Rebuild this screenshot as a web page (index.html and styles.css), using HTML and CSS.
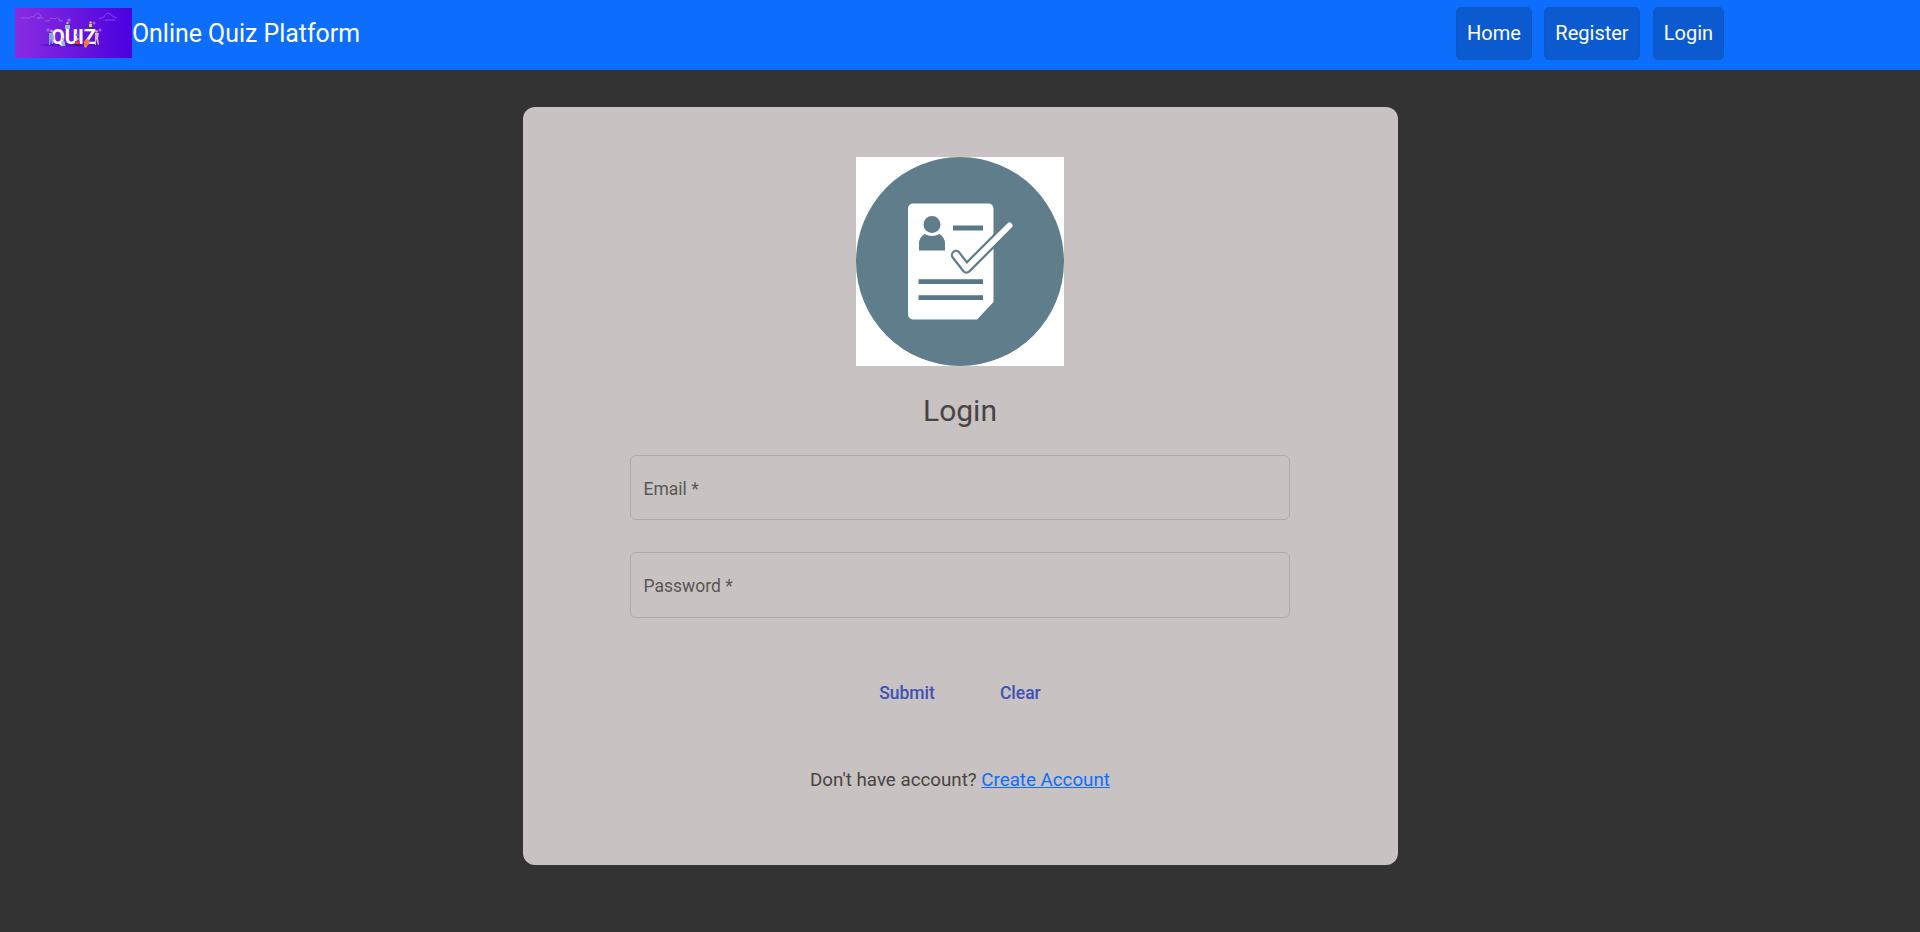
FILE: index.html
```html
<!DOCTYPE html>
<html lang="en">
<head>
<meta charset="utf-8">
<title>Online Quiz Platform</title>
<link rel="stylesheet" href="styles.css">
</head>
<body>
<header class="navbar">
  <a class="brand">
    <svg class="logo" viewBox="0 0 117 50" role="img" aria-label="Quiz">
      <defs>
        <linearGradient id="sky"><stop offset="0" stop-color="#8a2be2"/><stop offset=".5" stop-color="#6b18de"/><stop offset="1" stop-color="#4a00e0"/></linearGradient>
      </defs>
      <rect width="117" height="50" fill="url(#sky)"/>
      <g fill="none" stroke="#b184ee" stroke-width=".6" opacity=".85">
        <path d="M6 10h9c1-2 3-2 4-1 1-4 5-5 7-1 1 1-1 2-4 2h7"/>
        <path d="M30 13h4c1-3 4-3 6-2 2-2 4-1 4 1 2 0 2 1 0 1h4"/>
        <path d="M84 11l5-2c1-4 6-5 8-1 2 0 2 2 5 2M90 12h10"/>
      </g>
      <ellipse cx="58" cy="37" rx="33" ry="1.5" fill="#4c0bba" opacity=".6"/>
      <text class="logo-text" x="36" y="36" textLength="45" lengthAdjust="spacingAndGlyphs">QUIZ</text>
      <g fill="#8f63f2"><circle cx="33" cy="22" r="1.7"/><circle cx="54" cy="12" r="1.8"/><circle cx="79" cy="15" r="1.5"/><circle cx="85" cy="22" r="1.6"/><circle cx="62" cy="27" r="1.4"/></g>
      <g fill="#f0ad72"><circle cx="36.5" cy="23" r="1.2"/><circle cx="52.5" cy="15" r="1.2"/><circle cx="75.5" cy="14.5" r="1.2"/><circle cx="81.500" cy="23.500" r="1.300"/><circle cx="48" cy="31" r="1.2"/><circle cx="62.500" cy="31" r="1.200"/></g>
      <path d="M34 25h4l1 5-1 6h-1l-1-5-1 6h-1z" fill="#8ba5df"/>
      <path d="M50 17h5v4h-5zM46.500 33h3l1 5h-4z" fill="#8fc4dc"/>
      <path d="M74 16h3v3h-3z" fill="#e7c53e"/><path d="M72 19h6l-1 2h-5z" fill="#244a83"/>
      <path d="M60 33h5v3h-5z" fill="#ee3155"/><path d="M59 36h7v1.500h-7z" fill="#302159"/>
      <path d="M69 33l4-2 2 3-4 6-2-1z" fill="#ee7942"/>
      <path d="M80 25h4l-1 5 1 7h-1l-2-6v6h-1z" fill="#d8b9c7"/>
    </svg>
    <span class="brand-name">Online Quiz Platform</span>
  </a>
  <nav class="nav">
    <a class="nav-link nav-home">Home</a>
    <a class="nav-link nav-register">Register</a>
    <a class="nav-link nav-login">Login</a>
  </nav>
</header>
<main class="card">
  <svg class="avatar" viewBox="0 0 208 209" aria-hidden="true">
    <rect width="208" height="209" fill="#fff"/>
    <ellipse cx="104" cy="104.500" rx="104" ry="104.500" fill="#607d8b"/>
    <path d="M57 46.500h75.500a5 5 0 0 1 5 5V145l-16.500 17.500H57a5 5 0 0 1-5-5v-106a5 5 0 0 1 5-5z" fill="#fff"/>
    <g fill="#607d8b">
      <path d="M63 93.500V86.500q0-6 5.500-9.500 7.500 4 15 0 5.500 3.500 5.500 9.500v7z"/>
      <circle cx="76" cy="67.500" r="8.500"/>
    </g>
    <path d="M97 71h30M62.500 124.700h64.500M62.500 140.700h64.500" stroke="#567887" stroke-width="4.800" fill="none"/>
    <path d="M100 98l10.500 13.500L153.500 68.500" fill="none" stroke="#607d8b" stroke-width="10.400" stroke-linecap="round" stroke-linejoin="round"/>
    <path d="M100 98l10.500 13.500L153.500 68.500" fill="none" stroke="#fff" stroke-width="6" stroke-linecap="round" stroke-linejoin="round"/>
  </svg>
  <h1 class="title">Login</h1>
  <form class="form">
    <label class="field">Email *</label>
    <label class="field">Password *</label>
    <div class="actions">
      <button class="action" type="button">Submit</button>
      <button class="action" type="button">Clear</button>
    </div>
  </form>
  <p class="signup">Don't have account? <a class="signup-link">Create Account</a></p>
</main>
</body>
</html>
```
FILE: styles.css
```css
* { box-sizing: border-box; }
body {
  margin: 0;
  min-height: 932px;
  background: #333;
  color: #484444;
  font-family: Roboto, sans-serif;
}
.navbar {
  display: flex;
  justify-content: space-between;
  align-items: flex-start;
  height: 70px;
  padding: 7px 196px 0 15px;
  background: #0d6efd;
  color: #fff;
}
.brand { display: flex; align-items: flex-start; padding-top: 1px; }
.logo { display: block; width: 117px; height: 50px; }
.logo-text { font: bold 20px Roboto, sans-serif; fill: #fff; }
.brand-name { font-size: 24.9px; line-height: 52px; white-space: nowrap; }
.nav { display: flex; }
.nav-link {
  height: 53px;
  line-height: 51px;
  border: 1px solid #0c58ca;
  border-radius: 5px;
  background: #0b5acf;
  text-align: center;
  font-size: 20px;
}
.nav-home { width: 76px; margin-right: 12px; }
.nav-register { width: 96px; margin-right: 13px; }
.nav-login { width: 71px; }
.card {
  display: flex;
  flex-direction: column;
  align-items: center;
  width: 875px;
  height: 758px;
  margin: 37px 0 0 523px;
  padding: 50px 1px 0 0;
  border-radius: 12px;
  background: #c8c2c2;
}
.avatar { display: block; width: 208px; height: 209px; }
.title {
  margin: 26px 0 0;
  font-size: 30px;
  line-height: 38px;
  font-weight: 400;
}
.form { width: 660px; margin-top: 25px; }
.field {
  display: block;
  height: 65px;
  margin-bottom: 32px;
  padding-left: 12.5px;
  border: 1px solid #b0aaaa;
  border-radius: 6px;
  line-height: 66px;
  font-size: 17.5px;
  color: #5a5656;
}
.field + .field { height: 66px; }
.actions { display: flex; justify-content: center; gap: 41px; margin-top: 53px; }
.action {
  padding: 0 12px;
  border: 0;
  background: none;
  color: #3f51b5;
  font: 500 17.5px/44px Roboto, sans-serif;
}
.signup { margin: 50px 0 0; font-size: 18.75px; line-height: 30px; }
.signup-link { color: #0d6efd; text-decoration: underline; }
```
